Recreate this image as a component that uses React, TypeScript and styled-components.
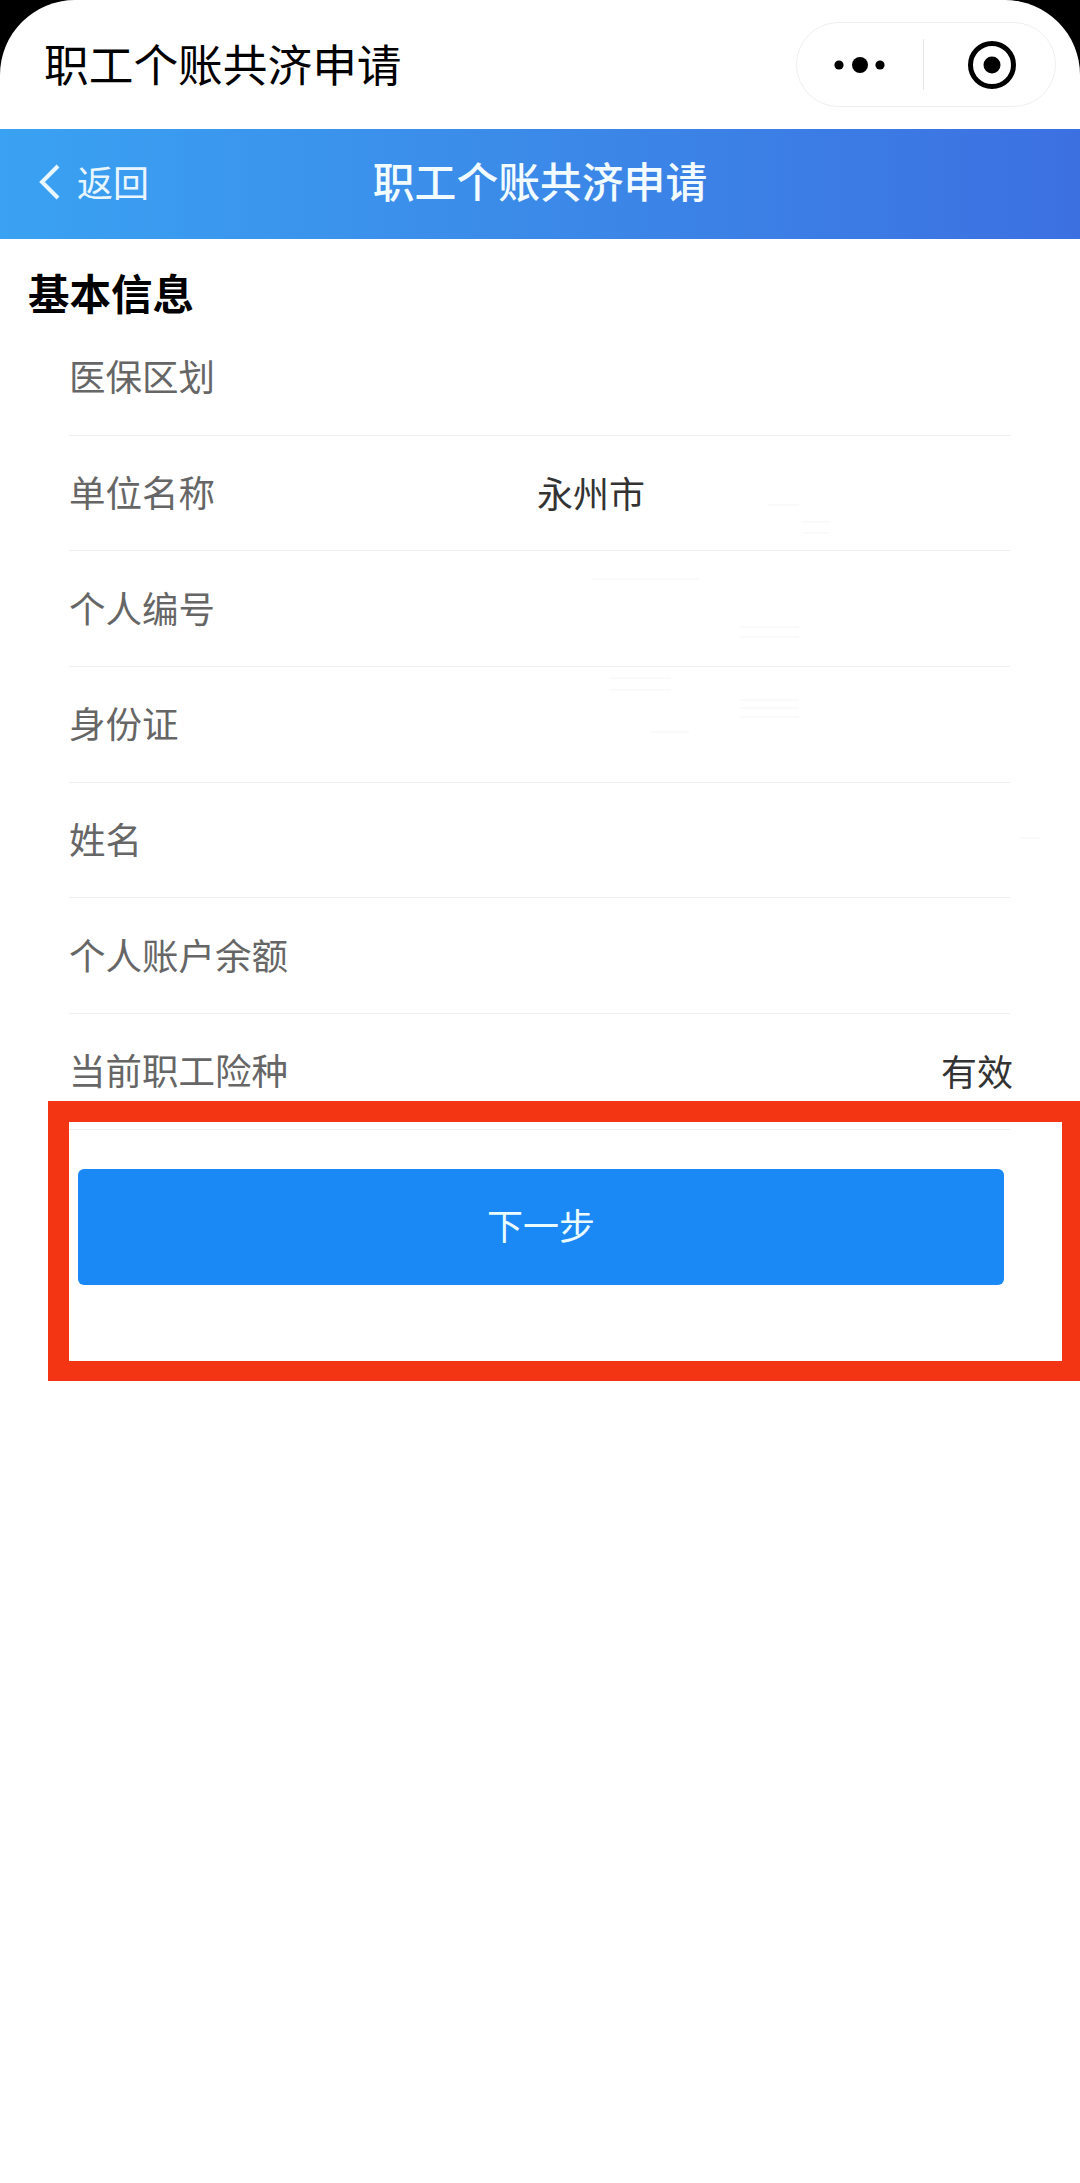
import styled, { createGlobalStyle } from 'styled-components';

const GlobalStyle = createGlobalStyle`
  html, body {
    margin: 0;
    padding: 0;
    background: #000;
  }
  * {
    box-sizing: border-box;
  }
`;

const Page = styled.div`
  position: relative;
  width: 1080px;
  height: 2183px;
  background: #fff;
  border-radius: 75px 75px 0 0;
  overflow: hidden;
  font-family: "Noto Sans CJK SC", "Liberation Sans", sans-serif;
`;

const TopBar = styled.div`
  height: 129px;
  display: flex;
  align-items: center;
  justify-content: space-between;
  padding: 0 24px 0 44px;
`;

const TopTitle = styled.div`
  font-size: 44.7px;
  line-height: 60px;
  padding-bottom: 4px;
  color: #000;
`;

const Capsule = styled.div`
  width: 260px;
  height: 85px;
  display: flex;
  align-items: center;
  border: 1.5px solid #eeeeee;
  border-radius: 43px;
`;

const CapsuleSlot = styled.div`
  flex: 1;
  display: flex;
  align-items: center;
  justify-content: center;
  height: 51px;
  & + & {
    border-left: 1.5px solid #e6e6e6;
    padding-left: 6px;
  }
`;

const Header = styled.div`
  height: 110px;
  display: grid;
  grid-template-columns: 1fr auto 1fr;
  align-items: center;
  background: linear-gradient(90deg, #3aa2f2 0%, #3b8ce9 45%, #3c70e1 100%);
  color: #fff;
`;

const BackLink = styled.div`
  display: flex;
  align-items: center;
  gap: 17px;
  padding-left: 38px;
  font-size: 36px;
  line-height: 48px;
  color: #e9f6ff;
`;

const BackChevron = styled.svg`
  margin-bottom: 4px;
`;

const BackLabel = styled.span`
  padding-bottom: 7px;
`;

const HeaderTitle = styled.div`
  font-size: 41.8px;
  font-weight: 500;
  line-height: 56px;
  padding-bottom: 8px;
  color: #f2fbff;
`;

const SectionTitle = styled.div`
  padding: 28px 0 0 28px;
  height: 81px;
  font-size: 41.5px;
  font-weight: 700;
  line-height: 50px;
  color: #000;
`;

const List = styled.div`
  margin: 0 70px 0 69px;
`;

const Row = styled.div`
  height: 115.7px;
  padding-bottom: 2px;
  display: grid;
  grid-template-columns: 468px 1fr;
  align-items: center;
  border-bottom: 1.5px solid #efefef;
  font-size: 36.5px;
  line-height: 48px;
`;

const Label = styled.div`
  color: #666;
`;

const Value = styled.div<{ $end?: boolean }>`
  color: #333;
  font-size: 36px;
  text-align: ${(p) => (p.$end ? 'right' : 'left')};
  margin-right: ${(p) => (p.$end ? '-3px' : '0')};
`;

const NextButton = styled.button`
  display: block;
  margin: 39px 0 0 78px;
  width: 926px;
  height: 116px;
  padding: 0 0 5px;
  border: 0;
  border-radius: 6px;
  background: #1a88f5;
  color: #eafcff;
  font-family: inherit;
  font-size: 36px;
`;

const RedFrame = styled.div`
  position: absolute;
  left: 48px;
  top: 1101px;
  right: 0;
  height: 280px;
  border: solid #f43513;
  border-width: 21px 18px 20px 21px;
`;

// faint leftovers of the redaction over the value column
const Smudges = styled.svg`
  position: absolute;
  left: 0;
  top: 0;
  width: 1080px;
  height: 1000px;
  pointer-events: none;
`;

const smudgeLines = [
  [768, 505, 799],
  [802, 522, 830],
  [802, 533, 830],
  [592, 579, 699],
  [740, 627, 799],
  [740, 637, 799],
  [610, 678, 671],
  [610, 690, 671],
  [740, 700, 799],
  [740, 708, 799],
  [740, 717, 799],
  [651, 732, 689],
  [1019, 838, 1040],
];

const rows: { label: string; value?: string; end?: boolean }[] = [
  { label: '医保区划' },
  { label: '单位名称', value: '永州市' },
  { label: '个人编号' },
  { label: '身份证' },
  { label: '姓名' },
  { label: '个人账户余额' },
  { label: '当前职工险种', value: '有效', end: true },
];

const App = () => {
  return (
    <Page>
      <GlobalStyle />
      <TopBar>
        <TopTitle>职工个账共济申请</TopTitle>
        <Capsule>
          <CapsuleSlot>
            <svg width="64" height="20" viewBox="0 0 64 20">
              <circle cx="11" cy="10" r="4.6" fill="#000" />
              <circle cx="32" cy="10" r="8" fill="#000" />
              <circle cx="52" cy="10" r="4.6" fill="#000" />
            </svg>
          </CapsuleSlot>
          <CapsuleSlot>
            <svg width="50" height="50" viewBox="0 0 50 50">
              <circle cx="25" cy="25" r="21.5" fill="none" stroke="#000" strokeWidth="5" />
              <circle cx="25" cy="25" r="8.5" fill="#000" />
            </svg>
          </CapsuleSlot>
        </Capsule>
      </TopBar>
      <Header>
        <BackLink>
          <BackChevron width="22" height="36" viewBox="0 0 22 36">
            <polyline points="20,2 4,18 20,34" fill="none" stroke="#e9f6ff" strokeWidth="4" />
          </BackChevron>
          <BackLabel>返回</BackLabel>
        </BackLink>
        <HeaderTitle>职工个账共济申请</HeaderTitle>
        <div />
      </Header>
      <SectionTitle>基本信息</SectionTitle>
      <List>
        {rows.map((row) => (
          <Row key={row.label}>
            <Label>{row.label}</Label>
            <Value $end={row.end}>{row.value}</Value>
          </Row>
        ))}
      </List>
      <NextButton>下一步</NextButton>
      <RedFrame />
      <Smudges viewBox="0 0 1080 1000">
        {smudgeLines.map(([x1, y, x2]) => (
          <line key={`${x1}-${y}`} x1={x1} y1={y} x2={x2} y2={y} stroke="#f8f8f8" strokeWidth="1.5" />
        ))}
      </Smudges>
    </Page>
  );
};

export default App;
